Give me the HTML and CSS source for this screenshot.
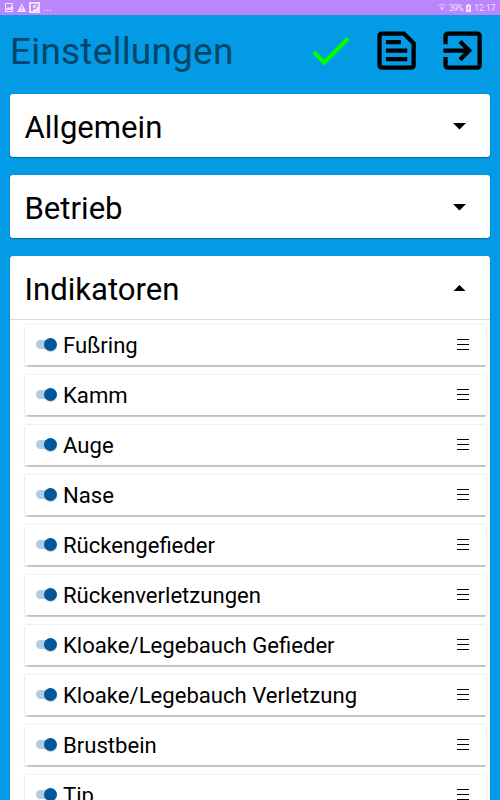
FILE: index.html
```
<!DOCTYPE html>
<html lang="de">
<head>
<meta charset="utf-8">
<title>Einstellungen</title>
<link rel="stylesheet" href="styles.css">
</head>
<body>
<div class="status">
  <svg class="status-left" width="40" height="15" viewBox="0 0 40 15">
    <path fill="#f0e2ff" fill-rule="evenodd" d="M5 3h8v9H5zM6 4v5l2-2 2 1 2-3V4zM6 10v1h6v-1z"/>
    <path fill="#f0e2ff" fill-rule="evenodd" d="M21.700 3.500L26.300 12H17.200zM21.200 6v3h1V6zM21.200 10v1h1v-1z"/>
    <path fill="#f0e2ff" fill-rule="evenodd" d="M29 2h11v11H29zM31 4v7h2V9h3V7h2V4z"/>
    <path fill="#f0e2ff" d="M33 5h4v1h-2v2h-2z"/>
  </svg>
  <span class="dots">...</span>
  <div class="status-right">
    <svg width="8" height="9" viewBox="0 0 8 9"><path d="M.5 2.500Q4 0 7.500 2.500M2 4.500Q4 3 6 4.500" fill="none" stroke="#e2ccff"/><path d="M2.500 5h3L4 8z" fill="#e2ccff"/></svg>
    <span class="percent">39%</span>
    <svg width="5" height="8" viewBox="0 0 5 8"><path fill="#f0e2ff" fill-rule="evenodd" d="M1.500 0h2v1H5v7H0V1h1.500zM2 2.500v2H1.500L2.500 6 3.500 4.500H3v-2z"/></svg>
    <span class="clock">12:17</span>
  </div>
</div>
<header class="header">
  <h1>Einstellungen</h1>
  <div class="actions">
    <svg viewBox="0 0 24 24" fill="#0f0"><path d="M9 16.170L4.830 12l-1.420 1.410L9 19 21 7l-1.410-1.410z"/></svg>
    <svg viewBox="0 0 24 24"><path d="M15 5l4 4v10H5V5h10m.800-2H5c-1.100 0-2 .900-2 2v14c0 1.100.900 2 2 2h14c1.100 0 2-.900 2-2V8.200L15.800 3zM7 15h10v2H7v-2zm0-4h10v2H7v-2zm0-4h7v2H7V7z"/></svg>
    <svg viewBox="0 0 24 24"><path d="M10.090 15.590L11.500 17l5-5-5-5-1.410 1.410L12.670 11H3v2h9.670l-2.580 2.590zM19 3H5c-1.110 0-2 .900-2 2v4h2V5h14v14H5v-4H3v4c0 1.100.890 2 2 2h14c1.100 0 2-.900 2-2V5c0-1.100-.900-2-2-2z"/></svg>
  </div>
</header>
<main class="panels">
  <section class="panel">
    <div class="panel-head"><h2>Allgemein</h2><svg class="arrow" viewBox="0 0 14 7"><path d="M0 0h14L7 7z"/></svg></div>
  </section>
  <section class="panel">
    <div class="panel-head"><h2>Betrieb</h2><svg class="arrow" viewBox="0 0 14 7"><path d="M0 0h14L7 7z"/></svg></div>
  </section>
  <section class="panel open">
    <div class="panel-head"><h2>Indikatoren</h2><svg class="arrow" viewBox="0 0 14 7"><path d="M0 7h14L7 0z"/></svg></div>
    <ul class="list">
      <li><i class="switch"></i><span>Fußring</span><i class="handle"></i></li>
      <li><i class="switch"></i><span>Kamm</span><i class="handle"></i></li>
      <li><i class="switch"></i><span>Auge</span><i class="handle"></i></li>
      <li><i class="switch"></i><span>Nase</span><i class="handle"></i></li>
      <li><i class="switch"></i><span>Rückengefieder</span><i class="handle"></i></li>
      <li><i class="switch"></i><span>Rückenverletzungen</span><i class="handle"></i></li>
      <li><i class="switch"></i><span>Kloake/Legebauch Gefieder</span><i class="handle"></i></li>
      <li><i class="switch"></i><span>Kloake/Legebauch Verletzung</span><i class="handle"></i></li>
      <li><i class="switch"></i><span>Brustbein</span><i class="handle"></i></li>
      <li><i class="switch"></i><span>Tip</span><i class="handle"></i></li>
    </ul>
  </section>
</main>
</body>
</html>
```
FILE: styles.css
```
* { box-sizing: border-box; }
html, body { height: 100%; }
body {
  margin: 0;
  overflow: hidden;
  display: flex;
  flex-direction: column;
  background: #039be5;
  color: #000;
  font-family: Roboto, "Liberation Sans", sans-serif;
}
h1, h2, ul { margin: 0; padding: 0; font-weight: 400; }
.status {
  flex: none;
  height: 15px;
  display: flex;
  align-items: center;
  background: #bb86fc;
  color: #f0e2ff;
  font-size: 8.5px;
  line-height: 15px;
}
.dots { margin-left: 3px; letter-spacing: .8px; font-weight: 500; padding-top: 1px; }
.status-right { margin-left: auto; padding-right: 4.500px; display: flex; align-items: center; gap: 3px; }
.status-right span { padding-top: 1px; }
.percent { letter-spacing: -.5px; }
.header {
  flex: none;
  height: 79px;
  padding: 0 12px 0 10px;
  display: flex;
  justify-content: space-between;
}
.header h1 {
  padding-top: 15px;
  font-size: 37px;
  letter-spacing: .2px;
  line-height: 44px;
  color: #02456b;
}
.actions { display: flex; gap: 14.600px; padding-top: 9.500px; }
.actions svg { width: 51.200px; height: 51.200px; }
.panels {
  flex: none;
  padding: 0 10px 0 9.500px;
  display: flex;
  flex-direction: column;
  gap: 18.500px;
}
.panel {
  background: #fff;
  border-radius: 3px;
  box-shadow: 0 1px 1px rgba(0, 0, 0, .3), 0 0 1px rgba(0, 0, 0, .25);
}
.panel-head {
  height: 62.500px;
  padding: 2px 24px 0 15px;
  display: flex;
  align-items: center;
  justify-content: space-between;
}
.panel-head h2 { padding-top: 3px; font-size: 31.100px; line-height: 40px; }
.arrow { width: 13px; height: 6.500px; }
.open .panel-head { height: 63.500px; border-bottom: 1px solid #dadada; }
.open .arrow { margin-bottom: 1px; }
.list { list-style: none; padding: 5px 4.500px 0 15px; }
.list li {
  height: 40px;
  margin-bottom: 10px;
  padding: 0 17px 0 11.500px;
  display: flex;
  align-items: center;
  font-size: 22.100px;
  line-height: 30px;
  box-shadow: 0 1.500px 1px rgba(0, 0, 0, .2), 0 0 2px rgba(0, 0, 0, .16);
}
.switch {
  position: relative;
  width: 20px;
  height: 9px;
  margin-right: 7px;
  border-radius: 5px;
  background: #b0cbe2;
}
.switch::after {
  content: "";
  position: absolute;
  right: -1px;
  top: -2px;
  width: 13px;
  height: 13px;
  border-radius: 50%;
  background: #01579b;
  box-shadow: 0 1px 1px rgba(0, 0, 0, .2);
}
.handle {
  width: 12px;
  height: 11px;
  margin-left: auto;
  border-top: 1px solid #000;
  border-bottom: 1px solid #000;
  background: linear-gradient(#000, #000) center / 100% 1px no-repeat;
}
```
